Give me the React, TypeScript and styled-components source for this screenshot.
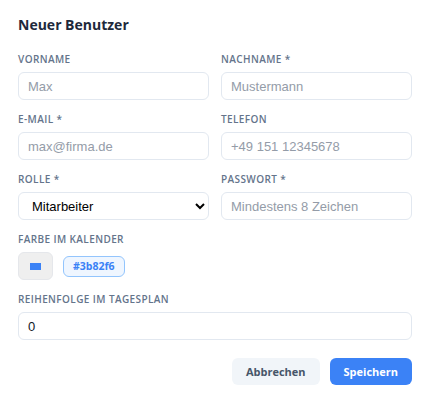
import { FC } from 'react';
import styled, { createGlobalStyle } from 'styled-components';

const GlobalStyle = createGlobalStyle`
  body {
    margin: 0;
    background: #ffffff;
    font-family: 'Open Sans', 'Noto Sans', sans-serif;
  }
`;

interface FieldProps {
  label: string;
  full?: boolean;
  children: React.ReactNode;
}

const Field: FC<FieldProps> = ({ label, full, children }) => (
  <FieldBlock $full={full}>
    <Label>{label}</Label>
    {children}
  </FieldBlock>
);

const App: FC = () => {
  return (
    <>
      <GlobalStyle />
      <Modal>
        <Title>Neuer Benutzer</Title>
        <FormGrid>
          <Field label="Vorname">
            <Input placeholder="Max" />
          </Field>
          <Field label="Nachname *">
            <Input placeholder="Mustermann" />
          </Field>
          <Field label="E-Mail *">
            <Input placeholder="max@firma.de" />
          </Field>
          <Field label="Telefon">
            <Input placeholder="+49 151 12345678" />
          </Field>
          <Field label="Rolle *">
            <Select defaultValue="mitarbeiter">
              <option value="mitarbeiter">Mitarbeiter</option>
              <option value="admin">Administrator</option>
            </Select>
          </Field>
          <Field label="Passwort *">
            <Input type="password" placeholder="Mindestens 8 Zeichen" />
          </Field>
          <Field label="Farbe im Kalender" full>
            <ColorRow>
              <ColorButton type="button">
                <Swatch style={{ background: '#3b82f6' }} />
              </ColorButton>
              <HexBadge>#3b82f6</HexBadge>
            </ColorRow>
          </Field>
          <Field label="Reihenfolge im Tagesplan" full>
            <Input defaultValue="0" />
          </Field>
        </FormGrid>
        <Actions>
          <Button $variant="secondary">Abbrechen</Button>
          <Button $variant="primary">Speichern</Button>
        </Actions>
      </Modal>
    </>
  );
};

export default App;

const Modal = styled.div`
  padding: 15px 15px 16px 18px;
  width: 394px;
`;

const Title = styled.h2`
  margin: 0 0 17px;
  font-size: 14px;
  line-height: 20px;
  font-weight: 700;
  color: #1e293b;
`;

const FormGrid = styled.div`
  display: grid;
  grid-template-columns: 1fr 1fr;
  column-gap: 12px;
  row-gap: 12px;
`;

const FieldBlock = styled.div<{ $full?: boolean }>`
  display: flex;
  flex-direction: column;
  gap: 6px;
  grid-column: ${(p) => (p.$full ? '1 / -1' : 'auto')};
`;

const Label = styled.label`
  font-size: 10px;
  line-height: 14px;
  font-weight: 600;
  text-transform: uppercase;
  letter-spacing: 0.4px;
  color: #64748b;
`;

const Input = styled.input`
  box-sizing: border-box;
  height: 28px;
  width: 100%;
  padding: 0 9px;
  border: 1px solid #e2e8f0;
  border-radius: 6px;
  font-family: 'Liberation Sans', Arial, sans-serif;
  font-size: 13px;
  color: #111827;
  background: #ffffff;
  outline: none;

  &::placeholder {
    color: #949ca8;
  }
`;

const Select = styled.select`
  box-sizing: border-box;
  height: 28px;
  width: 100%;
  padding: 0 5px 0 9px;
  border: 1px solid #e2e8f0;
  border-radius: 6px;
  font-family: 'Liberation Sans', Arial, sans-serif;
  font-size: 13px;
  color: #000000;
  background: #ffffff;
`;

const ColorRow = styled.div`
  display: flex;
  align-items: center;
  gap: 10px;
`;

const ColorButton = styled.button`
  box-sizing: border-box;
  width: 35px;
  height: 28px;
  padding: 0;
  border: 1px solid #e5e7eb;
  border-radius: 6px;
  background: #efefef;
  display: flex;
  align-items: center;
  justify-content: center;
`;

const Swatch = styled.span`
  display: block;
  width: 11px;
  height: 7px;
`;

const HexBadge = styled.span`
  box-sizing: border-box;
  height: 21px;
  padding: 0 9px;
  display: inline-flex;
  align-items: center;
  border: 1px solid #93c5fd;
  border-radius: 6px;
  background: #eff6ff;
  color: #3b82f6;
  font-size: 10.5px;
  font-weight: 700;
`;

const Actions = styled.div`
  display: flex;
  justify-content: flex-end;
  gap: 10px;
  margin-top: 18px;
`;

const Button = styled.button<{ $variant: 'primary' | 'secondary' }>`
  height: 27px;
  padding: 0 14px;
  border: none;
  border-radius: 6px;
  font-family: 'Open Sans', 'Noto Sans', sans-serif;
  font-size: 11px;
  font-weight: 700;
  cursor: pointer;
  background: ${(p) => (p.$variant === 'primary' ? '#3b82f6' : '#f1f5f9')};
  color: ${(p) => (p.$variant === 'primary' ? '#ffffff' : '#475569')};
`;
